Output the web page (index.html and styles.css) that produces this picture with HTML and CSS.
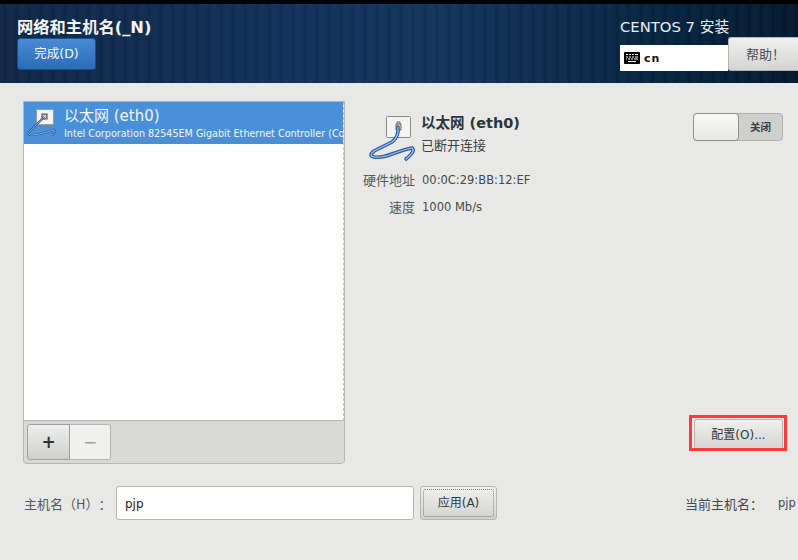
FILE: index.html
```html
<!DOCTYPE html>
<html lang="zh-CN">
<head>
<meta charset="utf-8">
<title>网络和主机名</title>
<link rel="stylesheet" href="styles.css">
</head>
<body>
<header class="header">
  <div class="header-left">
    <h1 class="title">网络和主机名(_N)</h1>
    <button class="btn-done">完成(D)</button>
  </div>
  <div class="header-right">
    <div class="product">CENTOS 7 安装</div>
    <div class="kb-row">
      <div class="kb">
        <svg class="kb-icon" width="16" height="12" viewBox="0 0 16 12"><rect width="16" height="12" rx="1" fill="#000"/><path d="M2 2.500h2M5 2.500h2M8 2.500h2M11 2.500h3M2 5h2M5 5h2M8 5h2M11 5h3M2 7h1M4 7h2M7 7h2M10 7h4M4 9.500h8" stroke="#fff" stroke-width="1" fill="none"/></svg>
        <span class="kb-text">cn</span>
      </div>
      <button class="btn-help">帮助！</button>
    </div>
  </div>
</header>
<main class="main">
  <section class="list-panel">
    <div class="list">
      <div class="row-selected">
        <svg class="row-icon" width="30" height="32" viewBox="0 0 30 32">
          <rect x="9.500" y="2.500" width="17" height="15" fill="#f4f4f2" stroke="#9a9a98"/>
          <rect x="15" y="7" width="5" height="5" fill="#c4c4c2" stroke="#444"/>
          <path d="M17 10 L2 25 Q0 28 6 28 Q14 27 27 23 Q29 25 25 28" fill="none" stroke="#2a5a98" stroke-width="2.200"/>
          <path d="M17 10 L2 25 Q0 28 6 28 Q14 27 27 23 Q29 25 25 28" fill="none" stroke="#9dbfe8" stroke-width="0.800"/>
        </svg>
        <div class="row-text">
          <div class="row-name">以太网 (eth0)</div>
          <div class="row-desc">Intel Corporation 82545EM Gigabit Ethernet Controller (Copper)</div>
        </div>
      </div>
    </div>
    <div class="toolbar">
      <button class="tool-add">+</button>
      <button class="tool-remove">−</button>
    </div>
  </section>
  <section class="detail">
    <div class="detail-top">
      <svg class="detail-icon" width="52" height="50" viewBox="0 0 52 50">
        <rect x="18.500" y="1.500" width="24" height="21" rx="1" fill="#f4f4f2" stroke="#8a8a88"/>
        <path d="M28 9h5v6h-5z M29 9v-2h3v2" fill="#ddd" stroke="#666"/>
        <path d="M30 12 Q31 22 24 27 L6 36 Q0 41 6 42 Q14 43 24 39 Q38 34 44 33 Q48 36 38 44" fill="none" stroke="#2b5c9e" stroke-width="3.600" stroke-linecap="round"/>
        <path d="M30 12 Q31 22 24 27 L6 36 Q0 41 6 42 Q14 43 24 39 Q38 34 44 33 Q48 36 38 44" fill="none" stroke="#a3c5ec" stroke-width="1.200" stroke-linecap="round"/>
      </svg>
      <div class="detail-heading">
        <div class="detail-name">以太网 (eth0)</div>
        <div class="detail-status">已断开连接</div>
      </div>
      <div class="toggle">
        <div class="toggle-knob"></div>
        <div class="toggle-label">关闭</div>
      </div>
    </div>
    <dl class="props">
      <dt>硬件地址</dt><dd>00:0C:29:BB:12:EF</dd>
      <dt>速度</dt><dd>1000 Mb/s</dd>
    </dl>
    <div class="detail-actions">
      <button class="btn btn-config">配置(O)...</button>
      <div class="highlight"></div>
    </div>
  </section>
</main>
<footer class="footer">
  <label class="host-label">主机名（H）：</label>
  <div class="host-input">pjp</div>
  <button class="btn btn-apply"><span class="focus-ring">应用(A)</span></button>
  <div class="current">
    <span class="current-label">当前主机名：</span>
    <span class="current-value">pjp</span>
  </div>
</footer>
</body>
</html>
```
FILE: styles.css
```css
* { box-sizing: border-box; }
html, body { margin: 0; padding: 0; }
body {
  width: 798px;
  height: 560px;
  overflow: hidden;
  background: #e8e8e7;
  color: #2e3436;
  font-family: "DejaVu Sans", "Noto Sans CJK SC", sans-serif;
  font-size: 12px;
  text-spacing-trim: space-all;
}
button { font-family: inherit; cursor: default; }

.header {
  height: 83px;
  border-top: 4px solid #000;
  display: flex;
  justify-content: space-between;
  color: #fff;
  background:
    repeating-linear-gradient(90deg, rgba(255,255,255,0.015) 0 3px, rgba(0,0,0,0.03) 3px 7px, rgba(255,255,255,0.02) 7px 12px),
    linear-gradient(90deg, #0f2745 0%, #12305a 35%, #14335c 55%, #0d2a4b 72%, #05233d 85%, #04192f 100%);
}
.header-left { padding: 13px 0 0 17px; }
.title {
  margin: 0;
  height: 21px;
  font-size: 16.300px;
  line-height: 21px;
  font-weight: 700;
  color: #f2f4f6;
  white-space: nowrap;
}
.btn-done {
  display: block;
  width: 79px;
  height: 32px;
  padding: 0 0 3px;
  border: 1px solid #1d4f8a;
  border-radius: 3px;
  background: linear-gradient(#4a8bd6, #2a6cb8);
  color: #f4f7fb;
  font-size: 12.500px;
}
.header-right { width: 178px; padding-top: 12px; }
.product { height: 21px; font-size: 14.800px; line-height: 22px; color: #e8ecf0; white-space: nowrap; }
.kb-row { display: flex; align-items: flex-start; }
.kb {
  width: 108px;
  height: 26px;
  margin-top: 8px;
  padding-left: 4px;
  background: #fff;
  display: flex;
  align-items: center;
  gap: 4px;
  color: #111;
}
.kb-text { font-size: 11px; font-weight: 700; letter-spacing: 1px; }
.btn-help {
  width: 70px;
  height: 34px;
  padding: 0 0 2px 4px;
  border: 1px solid #b4b4b1;
  border-right: 0;
  border-radius: 3px 0 0 3px;
  background: linear-gradient(#f0f0ef, #d4d4d2);
  color: #4a4f50;
  font-family: "Noto Sans CJK TC", sans-serif;
  font-size: 13px;
  text-spacing-trim: space-all;
}

.main {
  display: flex;
  height: 381px;
  padding: 18px 15px 0 23px;
}
.list-panel {
  width: 322px;
  height: 363px;
  display: flex;
  flex-direction: column;
  border: 1px solid #b5b5b2;
  border-radius: 0 0 4px 4px;
}
.list {
  height: 319px;
  background: #fff;
  border-bottom: 1px solid #b5b5b2;
  border-right: 1px dashed #c4c4c2;
  overflow: hidden;
}
.row-selected {
  height: 42px;
  display: flex;
  background: #4a90d9;
  color: #fff;
  overflow: hidden;
}
.row-icon { flex: none; margin: 5px 0 0 3px; }
.row-text { margin-left: 7px; white-space: nowrap; }
.row-name { font-size: 15px; line-height: 17px; margin-top: 6px; color: #f1f6fc; }
.row-desc { font-size: 9.600px; line-height: 14px; margin-top: 2px; color: #f1f6fc; }
.toolbar {
  flex: 1;
  padding: 3px 0 0 3px;
  display: flex;
  align-items: flex-start;
  background: #d9d9d7;
  border-radius: 0 0 4px 4px;
}
.tool-add, .tool-remove {
  height: 36px;
  padding: 0;
  border: 1px solid #b5b5b2;
  font-size: 17px;
  line-height: 1;
}
.tool-add {
  width: 43px;
  border-radius: 3px 0 0 3px;
  background: linear-gradient(#eeeeed, #cfcfcd);
  border-color: #a0a09d;
  color: #2e3436;
  font-weight: 700;
}
.tool-remove {
  width: 41px;
  border-left: 0;
  border-radius: 0 3px 3px 0;
  background: #f0f0ef;
  color: #a2a2a0;
}

.detail { flex: 1; display: flex; flex-direction: column; min-width: 0; padding-left: 23px; }
.detail-top { display: flex; height: 52px; margin-top: 10px; }
.detail-icon { flex: none; margin-top: 4px; }
.detail-heading { flex: 1; margin-left: 1px; }
.detail-name { font-size: 14.500px; font-weight: 700; line-height: 18px; margin-top: 3px; color: #2e3436; }
.detail-status { font-size: 13px; line-height: 17px; margin-top: 5px; color: #3c4144; }
.toggle {
  width: 90px;
  height: 28px;
  margin-top: 2px;
  display: flex;
  border: 1px solid #b0b0ad;
  border-radius: 4px;
  background: #cfcfcd;
}
.toggle-knob {
  width: 46px;
  margin: -1px 0 -1px -1px;
  border: 1px solid #8f8f8c;
  border-radius: 4px;
  background: linear-gradient(#f8f8f7, #e8e8e6);
}
.toggle-label { flex: 1; text-align: center; font-size: 10.500px; line-height: 26px; font-weight: 700; color: #3c4144; }
.props {
  margin: 9px 0 0 -5px;
  display: grid;
  grid-template-columns: 52px auto;
  column-gap: 7px;
  row-gap: 10px;
  justify-content: start;
  font-size: 11.500px;
  line-height: 17px;
}
.props dt { text-align: right; color: #555a5c; white-space: nowrap; font-size: 13px; }
.props dd { margin: 0; color: #45494c; }
.detail-actions {
  position: relative;
  margin-top: auto;
  margin-bottom: 13px;
  align-self: flex-end;
}
.btn {
  display: block;
  padding: 0;
  border: 1px solid #b5b5b2;
  border-radius: 3px;
  background: linear-gradient(#f0f0ef, #d2d2d0);
  color: #33383a;
  font-size: 12px;
}
.btn-config { width: 89px; height: 32px; padding-bottom: 3px; }
.highlight {
  position: absolute;
  left: -5px;
  top: -4px;
  width: 98px;
  height: 36px;
  border: 3px solid #fb3a3c;
  pointer-events: none;
}

.footer {
  display: flex;
  align-items: center;
  height: 34px;
  margin-top: 22px;
  padding-left: 24px;
}
.host-label { width: 92px; color: #55595b; font-family: "Noto Sans CJK TC", sans-serif; font-size: 13px; white-space: nowrap; }
.host-input {
  width: 298px;
  height: 34px;
  padding: 0 8px;
  line-height: 35px;
  background: #fff;
  border: 1px solid #b5b5b2;
  border-radius: 3px;
  color: #222;
  font-size: 12px;
}
.btn-apply { width: 77px; height: 34px; margin-left: 6px; padding: 2px; }
.focus-ring {
  display: block;
  height: 28px;
  line-height: 26px;
  border: 1px dotted #808080;
  border-radius: 2px;
}
.current { margin-left: auto; display: flex; align-items: center; color: #44484a; white-space: nowrap; }
.current-label { width: 93px; font-family: "Noto Sans CJK TC", sans-serif; font-size: 13px; }
.current-value { width: 20px; font-size: 11.500px; }
```
